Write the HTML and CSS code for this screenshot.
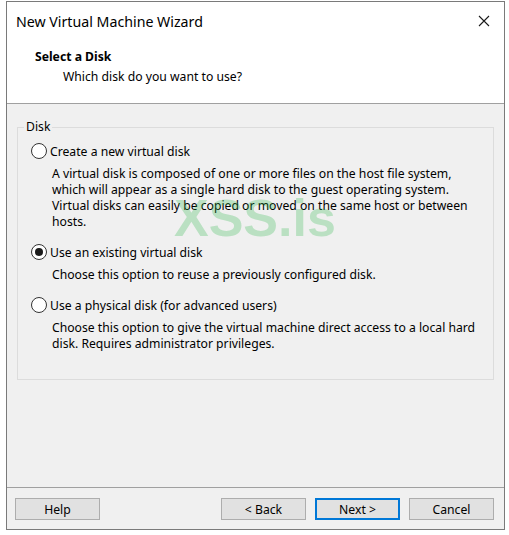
FILE: index.html
```html
<!DOCTYPE html>
<html lang="en">
<head>
    <meta charset="UTF-8">
    <title>New Virtual Machine Wizard</title>
    <link rel="stylesheet" href="styles.css">
</head>
<body>
    <div class="window">
        <div class="header">
            <div class="titlebar">
                <span class="title">New Virtual Machine Wizard</span>
                <svg class="close" width="12" height="12" viewBox="0 0 12 12">
                    <path d="M1 1 L11 11 M11 1 L1 11" stroke="#1a1a1a" stroke-width="1.1" fill="none"/>
                </svg>
            </div>
            <div class="step">
                <div class="step-title">Select a Disk</div>
                <div class="step-sub">Which disk do you want to use?</div>
            </div>
        </div>

        <div class="content">
            <fieldset class="group">
                <legend>Disk</legend>

                <label class="option">
                    <span class="radio"></span>
                    <span class="option-label">Create a new virtual disk</span>
                </label>
                <p class="desc">A virtual disk is composed of one or more files on the host file system, which will appear as a single hard disk to the guest operating system. Virtual disks can easily be copied or moved on the same host or between hosts.</p>

                <label class="option">
                    <span class="radio checked"></span>
                    <span class="option-label">Use an existing virtual disk</span>
                </label>
                <p class="desc">Choose this option to reuse a previously configured disk.</p>

                <label class="option">
                    <span class="radio"></span>
                    <span class="option-label">Use a physical disk (for advanced users)</span>
                </label>
                <p class="desc">Choose this option to give the virtual machine direct access to a local hard disk. Requires administrator privileges.</p>
            </fieldset>
            <div class="watermark">XSS.is</div>
        </div>

        <div class="footer">
            <button class="btn">Help</button>
            <div class="spacer"></div>
            <button class="btn">&lt; Back</button>
            <button class="btn default">Next &gt;</button>
            <button class="btn">Cancel</button>
        </div>
    </div>
</body>
</html>
```

FILE: styles.css
```css
body {
    margin: 0;
    background: #ffffff;
    font-family: "Noto Sans", "Open Sans", sans-serif;
    font-size: 12.2px;
    color: #000000;
}
.window {
    box-sizing: border-box;
    margin: 1px 0 0 6px;
    width: 499px;
    height: 529px;
    border: 1px solid #7a7a7a;
    background: #f0f0f0;
    display: flex;
    flex-direction: column;
}
.header {
    background: #ffffff;
    border-bottom: 1px solid #a0a0a0;
    padding-bottom: 18px;
}
.titlebar {
    height: 38px;
    display: flex;
    align-items: center;
    justify-content: space-between;
    padding: 0 14px 0 9px;
}
.title {
    font-size: 14.2px;
    color: #000000;
}
.close {
    display: block;
}
.step {
    padding-top: 9px;
}
.step-title {
    font-weight: bold;
    line-height: 16px;
    padding-left: 28px;
}
.step-sub {
    line-height: 16px;
    margin-top: 4px;
    padding-left: 56px;
}
.content {
    flex: 1;
    position: relative;
    padding: 15px 10px 0 10px;
}
.group {
    margin: 0;
    width: 477px;
    height: 261px;
    box-sizing: border-box;
    border: 1px solid #dcdcdc;
    padding: 8px 0 0 0;
}
.group legend {
    padding: 0 2px;
    margin-left: 6px;
    line-height: 16px;
}
.option {
    display: flex;
    align-items: center;
    height: 16px;
    gap: 3px;
    margin-left: 13px;
}
.radio {
    box-sizing: border-box;
    width: 16px;
    height: 16px;
    border: 1px solid #333333;
    border-radius: 50%;
    background: #ffffff;
    display: flex;
    align-items: center;
    justify-content: center;
}
.radio.checked::after {
    content: "";
    width: 8px;
    height: 8px;
    border-radius: 50%;
    background: #1a1a1a;
}
.desc {
    margin: 7px 0 14px 34px;
    line-height: 16px;
    width: 425px;
}
.watermark {
    position: absolute;
    left: 167px;
    top: 84px;
    font-family: "Liberation Sans", sans-serif;
    font-weight: bold;
    font-size: 52px;
    color: rgba(40, 180, 70, 0.27);
    pointer-events: none;
}
.footer {
    border-top: 1px solid #a0a0a0;
    display: flex;
    gap: 9px;
    padding: 10px 10px 9px 8px;
}
.spacer {
    flex: 1;
}
.btn {
    box-sizing: border-box;
    width: 85px;
    height: 22px;
    font-family: inherit;
    font-size: 12.2px;
    color: #000000;
    background: #e1e1e1;
    border: 1px solid #adadad;
    padding: 0;
}
.btn.default {
    border: 2px solid #0078d7;
}
```
